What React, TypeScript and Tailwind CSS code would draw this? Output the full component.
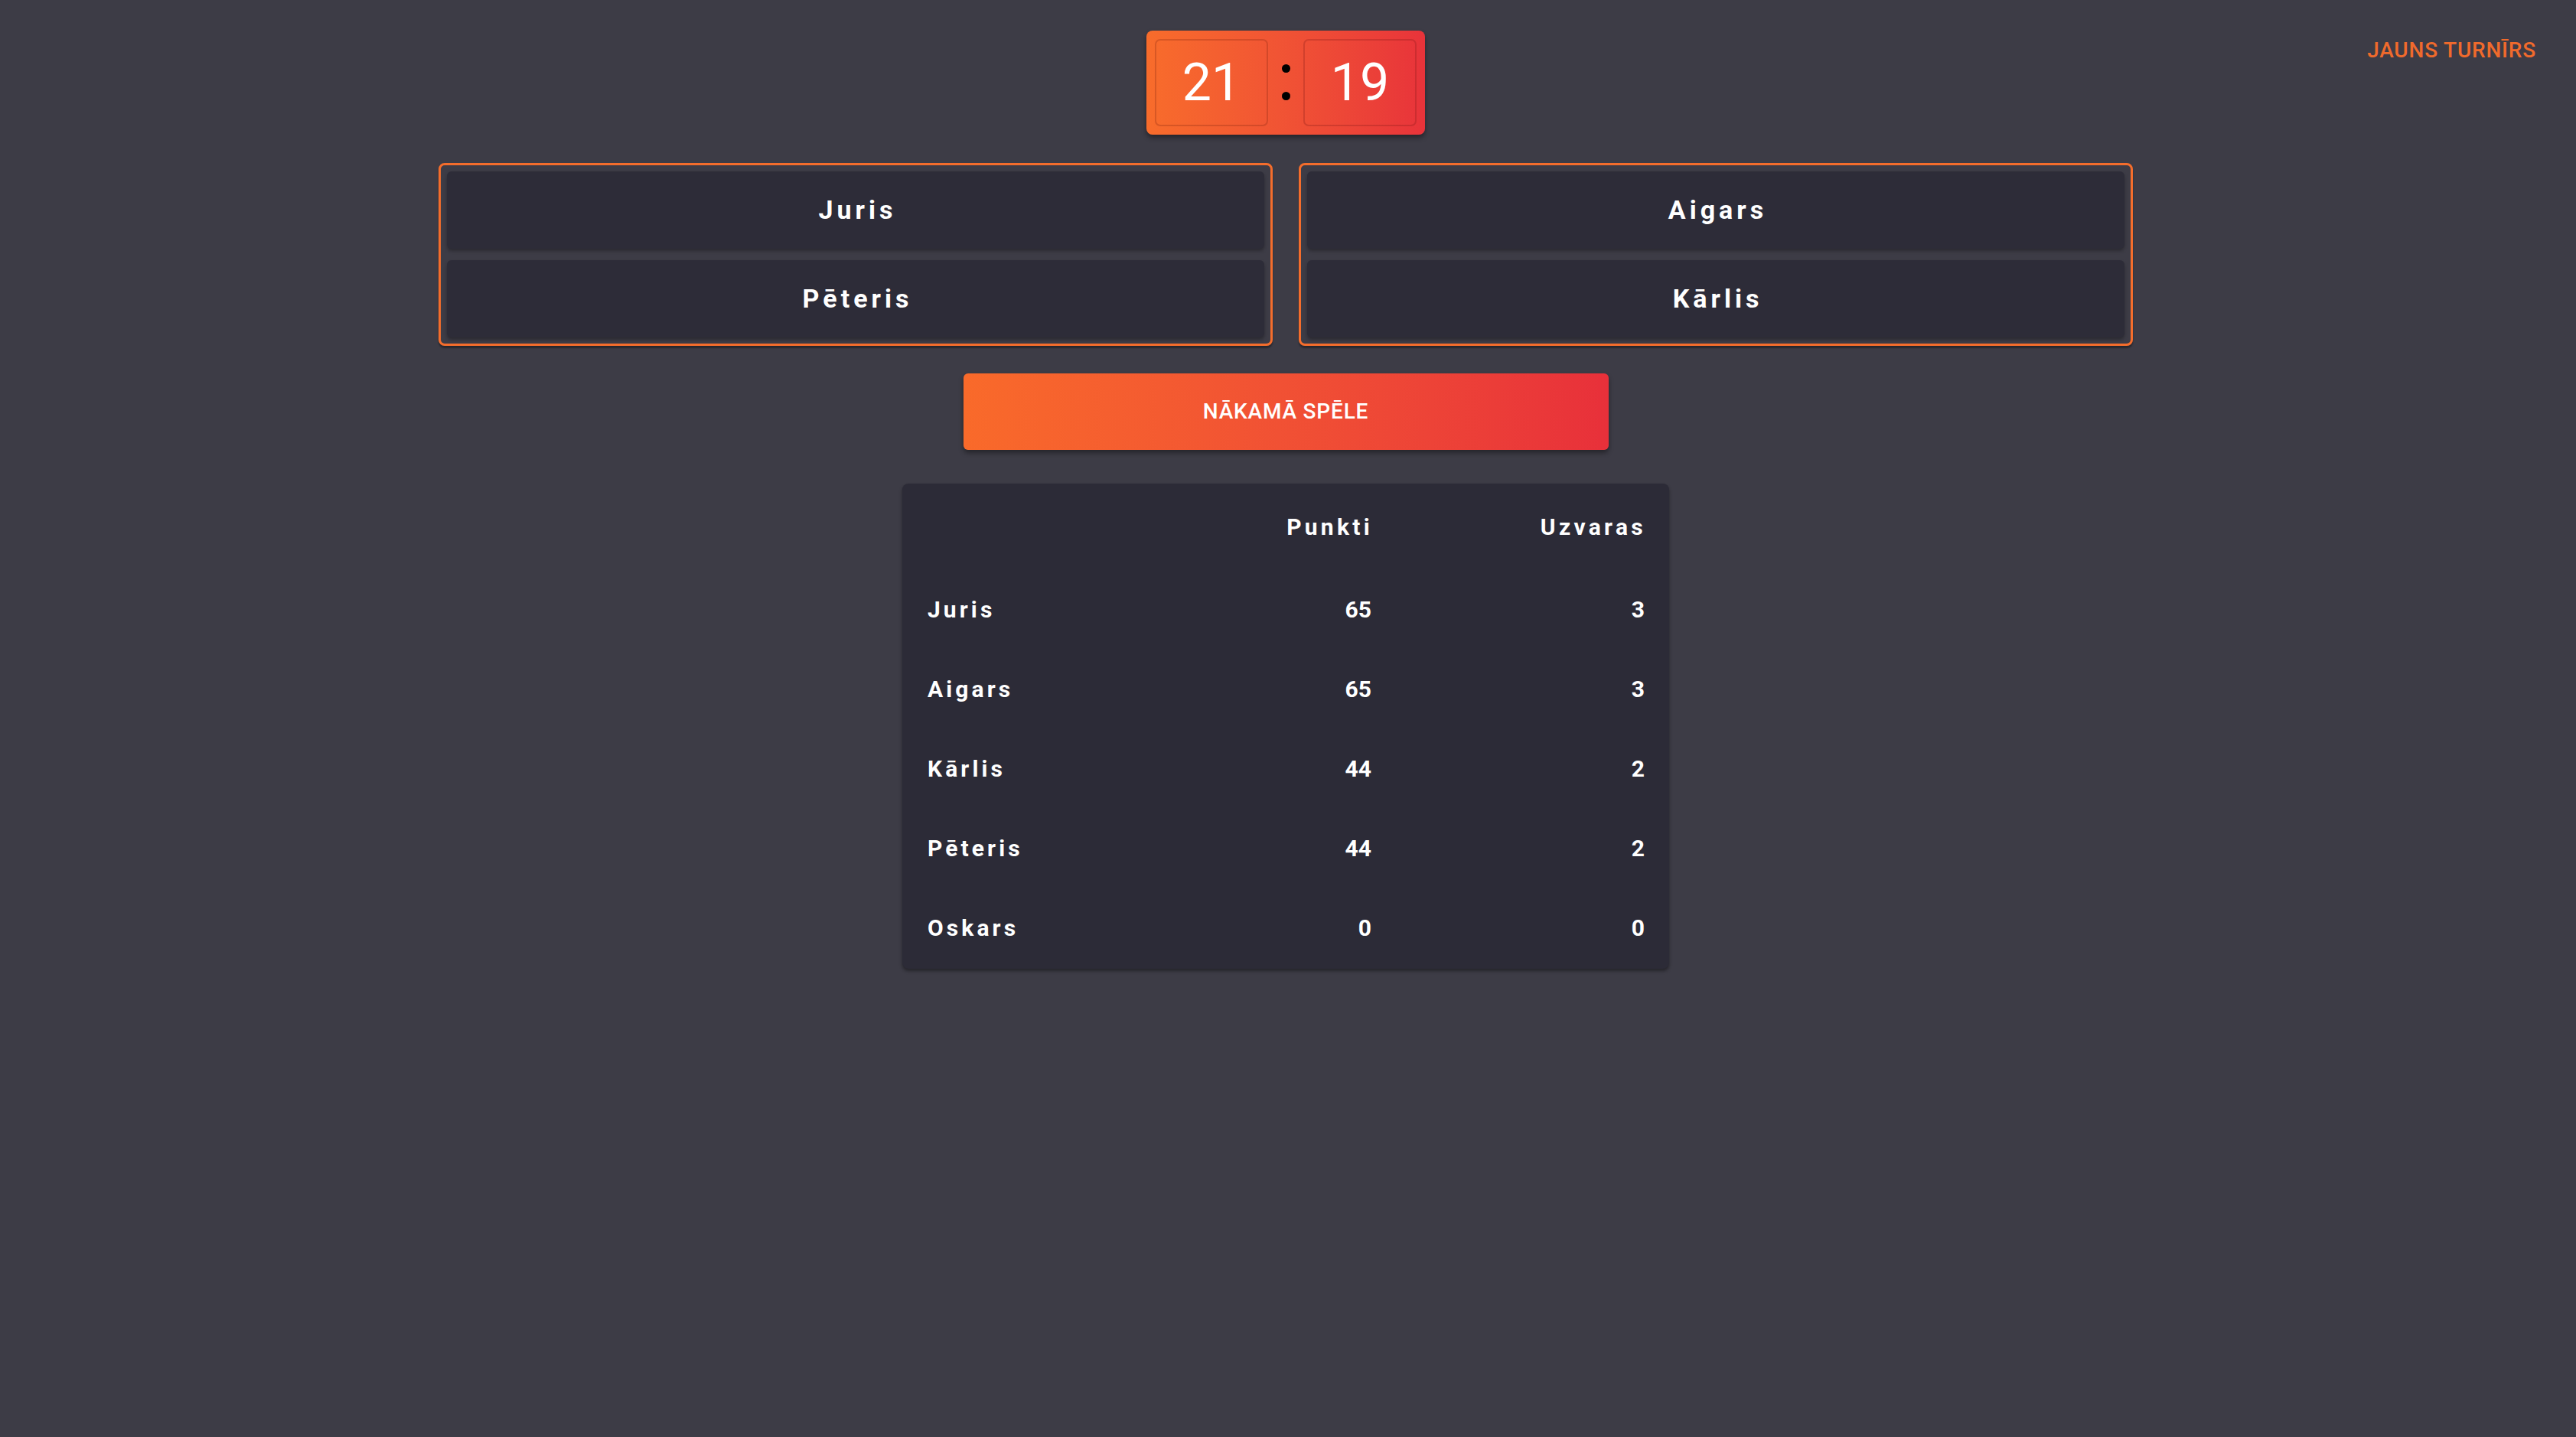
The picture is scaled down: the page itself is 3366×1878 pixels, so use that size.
import React from "react";

const rows = [
  { name: "Juris", p: 65, w: 3 },
  { name: "Aigars", p: 65, w: 3 },
  { name: "Kārlis", p: 44, w: 2 },
  { name: "Pēteris", p: 44, w: 2 },
  { name: "Oskars", p: 0, w: 0 },
];

function TeamBox({ a, b }: { a: string; b: string }) {
  return (
    <div className="flex-1 rounded-[8px] border-[3px] border-[#f46d2c] p-[8px] flex flex-col gap-[15px] shadow-[0_3px_2px_rgba(0,0,0,0.35)]">
      {[a, b].map((n) => (
        <div
          key={n}
          className="h-[101px] rounded-[6px] bg-[#2d2c38] flex items-center justify-center shadow-[0_3px_4px_rgba(0,0,0,0.3)]"
        >
          <span className="text-white font-bold text-[34px] tracking-[5px] pl-[5px]">{n}</span>
        </div>
      ))}
    </div>
  );
}

export default function App() {
  return (
    <div
      className="relative min-h-screen w-full bg-[#3d3c46]"
      style={{ fontFamily: "Roboto, 'Liberation Sans', sans-serif" }}
    >
      <button className="absolute right-[52px] top-[44px] text-[#f06a2c] font-medium text-[28px] tracking-[0.8px] uppercase leading-[44px]">
        Jauns turnīrs
      </button>
      <div className="w-[3360px] flex flex-col items-center pt-[40px]">
        {/* Score */}
        <div className="w-[364px] h-[136px] rounded-[8px] bg-gradient-to-r from-[#f86c2b] to-[#e8333a] p-[11px] flex items-center shadow-[0_4px_6px_rgba(0,0,0,0.4)]">
          <div className="w-[148px] h-[114px] rounded-[7px] border-2 border-[rgba(120,30,10,0.25)] flex items-center justify-center text-white text-[68px] leading-none">
            21
          </div>
          <div className="flex-1 flex flex-col items-center gap-[25px] pb-[2px]">
            <div className="w-[11px] h-[11px] rounded-full bg-black" />
            <div className="w-[11px] h-[11px] rounded-full bg-black" />
          </div>
          <div className="w-[148px] h-[114px] rounded-[7px] border-2 border-[rgba(120,20,20,0.25)] flex items-center justify-center text-white text-[68px] leading-none">
            19
          </div>
        </div>

        {/* Teams */}
        <div className="mt-[37px] w-[2214px] flex gap-[34px]">
          <TeamBox a="Juris" b="Pēteris" />
          <TeamBox a="Aigars" b="Kārlis" />
        </div>

        {/* Button */}
        <button className="mt-[36px] w-[843px] h-[100px] rounded-[6px] bg-gradient-to-r from-[#f96a2a] to-[#e8303a] text-white font-medium text-[28px] tracking-[0.8px] uppercase shadow-[0_4px_6px_rgba(0,0,0,0.4)]">
          Nākamā spēle
        </button>

        {/* Table */}
        <div className="mt-[44px] w-[1002px] rounded-[8px] bg-[#2c2b37] shadow-[0_3px_4px_rgba(0,0,0,0.4)] pb-[2px]">
          <div className="grid grid-cols-[311px_334px_357px] h-[112px] items-center text-white font-bold text-[30px]">
            <div />
            <div className="text-right pr-[30px] tracking-[4.3px]">Punkti</div>
            <div className="text-right pr-[30px] tracking-[4.3px]">Uzvaras</div>
          </div>
          {rows.map((r) => (
            <div
              key={r.name}
              className="grid grid-cols-[311px_334px_357px] h-[104px] items-center text-white font-bold text-[30px]"
            >
              <div className="pl-[33px] tracking-[4.1px]">{r.name}</div>
              <div className="text-right pr-[32px]">{r.p}</div>
              <div className="text-right pr-[32px]">{r.w}</div>
            </div>
          ))}
        </div>
      </div>
    </div>
  );
}
